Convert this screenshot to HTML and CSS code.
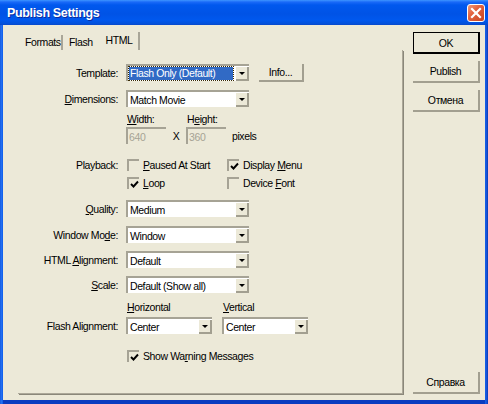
FILE: index.html
```html
<!DOCTYPE html>
<html>
<head>
<meta charset="utf-8">
<link rel="stylesheet" href="styles.css">
</head>
<body>
<div class="window">
  <div class="titlebar">
    <span class="title">Publish Settings</span>
    <span class="close"><svg width="12" height="12" viewBox="0 0 12 12"><path d="M2 2 L10 10 M10 2 L2 10" stroke="#fff" stroke-width="2.2" stroke-linecap="square"/></svg></span>
  </div>
  <div class="client">
    <div class="left">
      <div class="tabs">
        <div class="tab t1">Formats</div>
        <div class="tab t2">Flash</div>
        <div class="tab t3">HTML</div>
      </div>
      <div class="panel">
        <div class="row r-template">
          <span class="lbl">Template:</span>
          <div class="combo w123"><span class="ctext"><span class="sel">Flash Only (Default)</span></span><span class="arrow"><i></i></span></div>
          <span class="pbtn">Info...</span>
        </div>
        <div class="row r-dim">
          <span class="lbl"><u>D</u>imensions:</span>
          <div class="combo w123"><span class="ctext">Match Movie</span><span class="arrow"><i></i></span></div>
        </div>
        <div class="row small r-whl">
          <span class="sub w60"><u>W</u>idth:</span>
          <span class="sub">H<u>e</u>ight:</span>
        </div>
        <div class="row r-wh">
          <div class="input">640</div>
          <span class="times">X</span>
          <div class="input">360</div>
          <span class="pixels">pixels</span>
        </div>
        <div class="row small r-pb1">
          <span class="lbl">Playback:</span>
          <span class="check c1"><span class="cb"></span><span><u>P</u>aused At Start</span></span>
          <span class="check"><span class="cb on"><svg width="9" height="9" viewBox="0 0 9 9"><path d="M1 4 L3.5 6.5 L8 1.5" stroke="#000" stroke-width="1.9" fill="none"/></svg></span><span>Display <u>M</u>enu</span></span>
        </div>
        <div class="row small r-pb2">
          <span class="check c1 ind"><span class="cb on"><svg width="9" height="9" viewBox="0 0 9 9"><path d="M1 4 L3.5 6.5 L8 1.5" stroke="#000" stroke-width="1.9" fill="none"/></svg></span><span><u>L</u>oop</span></span>
          <span class="check"><span class="cb"></span><span>Device <u>F</u>ont</span></span>
        </div>
        <div class="row r-q">
          <span class="lbl"><u>Q</u>uality:</span>
          <div class="combo w123"><span class="ctext">Medium</span><span class="arrow"><i></i></span></div>
        </div>
        <div class="row r-next">
          <span class="lbl">Window Mo<u>d</u>e:</span>
          <div class="combo w123"><span class="ctext">Window</span><span class="arrow"><i></i></span></div>
        </div>
        <div class="row r-next2">
          <span class="lbl">HTML <u>A</u>lignment:</span>
          <div class="combo w123"><span class="ctext">Default</span><span class="arrow"><i></i></span></div>
        </div>
        <div class="row r-next2">
          <span class="lbl"><u>S</u>cale:</span>
          <div class="combo w123"><span class="ctext">Default (Show all)</span><span class="arrow"><i></i></span></div>
        </div>
        <div class="row small r-hvl">
          <span class="sub w96"><u>H</u>orizontal</span>
          <span class="sub"><u>V</u>ertical</span>
        </div>
        <div class="row r-fa">
          <span class="lbl">Flash Ali<u>g</u>nment:</span>
          <div class="combo w86"><span class="ctext">Center</span><span class="arrow"><i></i></span></div>
          <div class="combo w86 gapl"><span class="ctext">Center</span><span class="arrow"><i></i></span></div>
        </div>
        <div class="row small r-warn">
          <span class="check ind"><span class="cb on"><svg width="9" height="9" viewBox="0 0 9 9"><path d="M1 4 L3.5 6.5 L8 1.5" stroke="#000" stroke-width="1.9" fill="none"/></svg></span><span>Show Wa<u>r</u>ning Messages</span></span>
        </div>
      </div>
    </div>
    <div class="buttons">
      <div class="btn default">OK</div>
      <div class="btn">Publish</div>
      <div class="btn">Отмена</div>
      <div class="btn help">Справка</div>
    </div>
  </div>
</div>
</body>
</html>
```
FILE: styles.css
```css
* { box-sizing: border-box; }
html, body { margin: 0; padding: 0; }
body {
  font-family: "Liberation Sans", "DejaVu Sans", sans-serif;
  font-size: 10.5px;
  letter-spacing: -0.4px;
  color: #000;
  background: #0055E5;
}
u { text-decoration: underline; text-underline-offset: 1px; }
.window {
  width: 488px;
  height: 404px;
  display: flex;
  flex-direction: column;
  background: linear-gradient(to right, #0A4FD8 0, #2A74F2 1px, #0A5CEC 3px, #0A5CEC 485px, #1A5DE0 486px, #0838B8 488px);
}
.titlebar {
  flex: none;
  height: 25px;
  display: flex;
  align-items: center;
  justify-content: space-between;
  padding: 1px 3px 0 7px;
  background: linear-gradient(#3D95FF 0, #1A6AF8 2px, #0058EE 5px, #0053E6 14px, #0058EE 20px, #0350D8 24px, #0A46C8 25px);
}
.title {
  color: #fff;
  font-weight: bold;
  font-size: 12.5px;
  letter-spacing: -0.35px;
  text-shadow: 1px 1px 0 #0B2C9E;
}
.close {
  width: 18px;
  height: 18px;
  border: 1px solid #fff;
  border-radius: 3px;
  background: linear-gradient(135deg, #F09A7A 0, #E2623E 40%, #C84520 100%);
  display: flex;
  align-items: center;
  justify-content: center;
}
.client {
  flex: 1;
  margin: 0 3px 4px 3px;
  background: #ECE9D8;
  display: flex;
  padding: 7px 5px 6px 15px;
  box-shadow: 0 4px 0 #0A3CC0;
}
.left {
  width: 385px;
  flex: none;
  display: flex;
  flex-direction: column;
}
.tabs {
  flex: none;
  height: 18px;
  display: flex;
  align-items: flex-end;
}
.tab {
  height: 15px;
  line-height: 15px;
  white-space: nowrap;
}
.t1 { width: 45px; padding-left: 7px; border-right: 2px solid #A9A698; }
.t2 { width: 37px; padding-left: 6px; }
.t3 {
  width: 40px;
  height: 18px;
  line-height: 17px;
  text-align: center;
  border-right: 2px solid #A9A698;
}
.panel {
  flex: 1;
  border-right: 1px solid #ACA899;
  border-bottom: 1px solid #ACA899;
  box-shadow: 1px 1px 0 #8A877A;
  padding-top: 14px;
}
.row {
  display: flex;
  align-items: center;
  height: 17px;
  white-space: nowrap;
}
.row.small { height: 12px; }
.lbl {
  width: 100px;
  margin-right: 8px;
  text-align: right;
  flex: none;
}
.r-dim { margin-top: 9px; }
.r-whl { margin-top: 6px; padding-left: 109px; }
.r-wh { margin-top: 2px; padding-left: 108px; }
.r-pb1 { margin-top: 15px; }
.r-pb2 { margin-top: 6px; }
.r-q { margin-top: 11px; }
.r-next { margin-top: 9px; }
.r-next2 { margin-top: 8px; }
.r-hvl { margin-top: 8px; padding-left: 109px; }
.r-fa { margin-top: 4px; }
.r-warn { margin-top: 16px; }
.sub { flex: none; }
.w60 { width: 60px; }
.w96 { width: 96px; }
.combo {
  flex: none;
  height: 17px;
  display: flex;
  align-items: center;
  background: #fff;
  border-top: 2px solid #A6A395;
  border-left: 2px solid #A6A395;
}
.w123 { width: 123px; }
.w86 { width: 86px; }
.gapl { margin-left: 10px; }
.ctext {
  flex: 1;
  min-width: 0;
  overflow: hidden;
  padding-left: 2px;
  display: flex;
  align-items: center;
  height: 15px;
}
.sel {
  background: #316AC5;
  color: #fff;
  width: 104px;
  height: 13px;
  line-height: 12px;
  padding-left: 1px;
  margin-left: -1px;
  outline: 1px dotted #3A2A00;
}
.arrow {
  flex: none;
  width: 13px;
  height: 14px;
  align-self: flex-end;
  background: #ECE9D8;
  border-right: 2px solid #A29F90;
  border-bottom: 2px solid #A29F90;
  display: flex;
  align-items: center;
  justify-content: center;
}
.arrow i {
  display: block;
  width: 0;
  height: 0;
  border-left: 3px solid transparent;
  border-right: 3px solid transparent;
  border-top: 3px solid #000;
}
.pbtn {
  flex: none;
  margin-left: 10px;
  width: 45px;
  height: 18px;
  display: flex;
  align-items: center;
  justify-content: center;
  border-right: 2px solid #A29F90;
  border-bottom: 2px solid #A29F90;
}
.input {
  flex: none;
  width: 40px;
  height: 17px;
  border-top: 2px solid #A6A395;
  border-left: 2px solid #A6A395;
  color: #A6A395;
  padding-left: 1px;
  display: flex;
  align-items: center;
}
.times { width: 20px; text-align: center; flex: none; }
.pixels { margin-left: 6px; }
.check {
  display: flex;
  align-items: center;
  flex: none;
}
.check.c1 { width: 100px; margin-left: 1px; }
.check.ind { margin-left: 109px; }
.cb {
  flex: none;
  width: 12px;
  height: 12px;
  border-top: 2px solid #A6A395;
  border-left: 2px solid #A6A395;
  margin-right: 4px;
  display: flex;
  align-items: center;
  justify-content: center;
}
.buttons {
  flex: none;
  width: 67px;
  margin-left: 10px;
  display: flex;
  flex-direction: column;
  gap: 7px;
}
.btn {
  height: 22px;
  display: flex;
  align-items: center;
  justify-content: center;
  border-right: 2px solid #A29F90;
  border-bottom: 2px solid #A29F90;
}
.btn.default {
  border: 1px solid #000;
  border-right: 2px solid #000;
  border-bottom: 2px solid #000;
}
.btn.help { margin-top: auto; }
```
